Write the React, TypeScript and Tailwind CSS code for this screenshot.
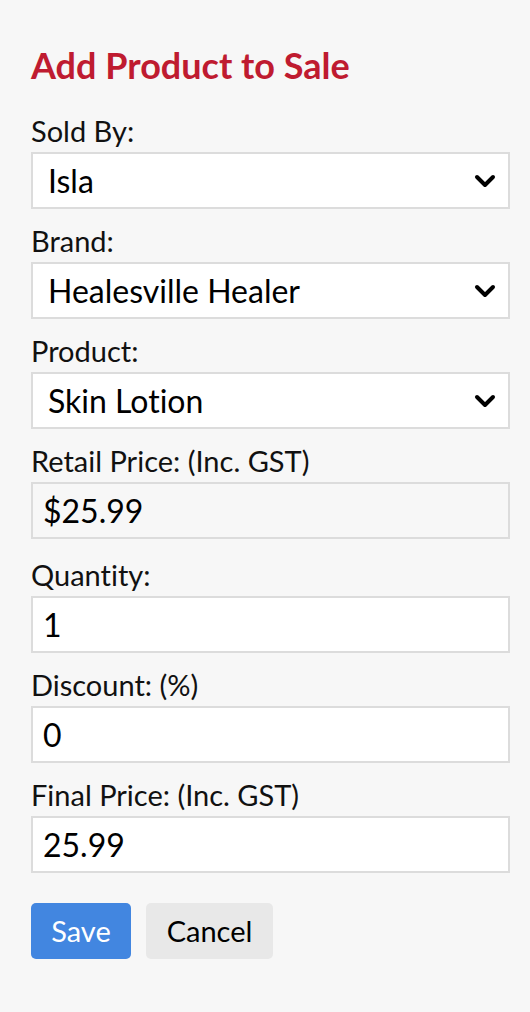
import React from "react";

const Chevron = () => (
  <svg width="22" height="14" viewBox="0 0 22 14" className="absolute right-[12px] top-1/2 -translate-y-1/2" fill="none">
    <path d="M3 3 L11 11 L19 3" stroke="#000" strokeWidth="4" strokeLinecap="round" strokeLinejoin="round" />
  </svg>
);

function SelectField({ label, value }: { label: string; value: string }) {
  return (
    <div className="flex flex-col">
      <div className="text-[29px] leading-[30px] text-[#111]">{label}</div>
      <div className="relative mt-[6px] h-[57px] border-2 border-[#dcdcdc] bg-white flex items-center pl-[15px] text-[32px] text-black">
        {value}
        <Chevron />
      </div>
    </div>
  );
}

function InputField({ label, value, readOnly }: { label: string; value: string; readOnly?: boolean }) {
  return (
    <div className="flex flex-col">
      <div className="text-[29px] leading-[30px] text-[#111]">{label}</div>
      <div
        className={
          "mt-[6px] h-[57px] border-2 border-[#dcdcdc] flex items-center pl-[10px] text-[32px] text-black " +
          (readOnly ? "bg-[#f7f7f7]" : "bg-white")
        }
      >
        {value}
      </div>
    </div>
  );
}

export default function App() {
  return (
    <div
      className="min-h-[1012px] w-[530px] bg-[#f7f7f7] pl-[31px] pr-[20px] pt-[44px] font-['Lato',sans-serif]"
      style={{ fontVariantLigatures: "none" }}
    >
      <h1 className="text-[36px] leading-[42px] font-bold text-[#bf1b30]">Add Product to Sale</h1>
      <div className="mt-[30px] flex flex-col gap-[17px]">
        <SelectField label="Sold By:" value="Isla" />
        <SelectField label="Brand:" value="Healesville Healer" />
        <SelectField label="Product:" value="Skin Lotion" />
        <div className="mb-[4px]">
          <InputField label="Retail Price: (Inc. GST)" value="$25.99" readOnly />
        </div>
        <InputField label="Quantity:" value="1" />
        <InputField label="Discount: (%)" value="0" />
        <InputField label="Final Price: (Inc. GST)" value="25.99" />
      </div>
      <div className="mt-[30px] flex gap-[15px]">
        <button className="h-[56px] w-[100px] rounded-[5px] bg-[#4286e0] text-white text-[29px]">Save</button>
        <button className="h-[56px] w-[127px] rounded-[5px] bg-[#e8e8e8] text-black text-[29px]">Cancel</button>
      </div>
    </div>
  );
}
